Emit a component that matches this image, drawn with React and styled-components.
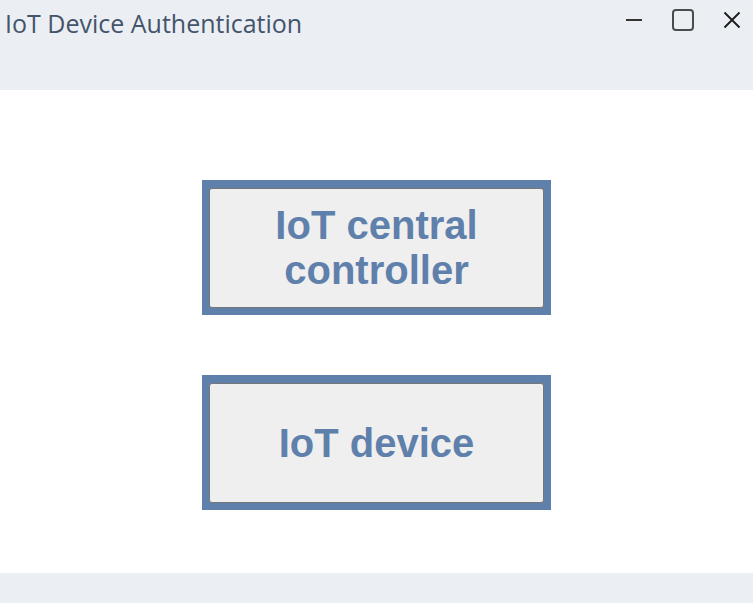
import React from "react";
import styled, { createGlobalStyle } from "styled-components";

const GlobalStyle = createGlobalStyle`
  *, *::before, *::after { box-sizing: border-box; }
  html, body { margin: 0; background: #ffffff; }
`;

const Window = styled.div`
  display: flex;
  flex-direction: column;
  min-height: 100vh;
  background: #ffffff;
`;

const TitleBar = styled.header`
  display: flex;
  justify-content: space-between;
  align-items: flex-start;
  height: 90px;
  padding-left: 5px;
  background: #ebeff4;
`;

const Title = styled.h1`
  margin: 0;
  padding-top: 6px;
  font: 400 25px/34px "Open Sans", "Noto Sans", sans-serif;
  color: #44546a;
  white-space: nowrap;
`;

const WindowControls = styled.div`
  display: flex;
  padding-right: 9px;
  gap: 25px;
`;

const ControlButton = styled.button`
  display: grid;
  place-items: center;
  width: 24px;
  height: 40px;
  padding: 0;
  border: 0;
  background: transparent;
  color: ${({ $tone }) => $tone};
`;

const Icon = styled.svg`
  display: block;
  width: 24px;
  height: 24px;
  fill: none;
  stroke: currentColor;
`;

const Content = styled.main`
  display: flex;
  flex: 1;
  flex-direction: column;
  align-items: center;
  gap: 60px;
  padding: 90px 16px 63px;
`;

const ChoiceFrame = styled.div`
  width: 100%;
  max-width: 349px;
  padding: 8px 7px 7px;
  background: #5f80ab;
`;

const ChoiceButton = styled.button`
  display: block;
  width: 100%;
  min-height: 120px;
  padding: 14px 40px;
  border: 1px solid #767676;
  border-radius: 3px;
  background: #efefef;
  color: #5f80ab;
  font: 700 40px/45px "Liberation Sans", Arial, sans-serif;
  text-align: center;
`;

const Footer = styled.footer`
  height: 30px;
  background: #ebeff4;
`;

const choices = ["IoT central controller", "IoT device"];

export default function App() {
  return (
    <>
      <GlobalStyle />
      <Window>
        <TitleBar>
          <Title>IoT Device Authentication</Title>
          <WindowControls>
            <ControlButton type="button" aria-label="Minimize" $tone="#333333">
              <Icon viewBox="0 0 24 24" aria-hidden="true">
                <path d="M4 12h16" strokeWidth="2" />
              </Icon>
            </ControlButton>
            <ControlButton type="button" aria-label="Maximize" $tone="#4a4b4d">
              <Icon viewBox="0 0 24 24" aria-hidden="true">
                <rect x="2" y="2" width="20" height="20" rx="3" strokeWidth="2" />
              </Icon>
            </ControlButton>
            <ControlButton type="button" aria-label="Close" $tone="#1c1c1c">
              <Icon viewBox="0 0 24 24" aria-hidden="true">
                <path d="M4.5 4.5l15 15M19.5 4.5l-15 15" strokeWidth="1.9" />
              </Icon>
            </ControlButton>
          </WindowControls>
        </TitleBar>
        <Content>
          {choices.map((label) => (
            <ChoiceFrame key={label}>
              <ChoiceButton type="button">{label}</ChoiceButton>
            </ChoiceFrame>
          ))}
        </Content>
        <Footer />
      </Window>
    </>
  );
}
